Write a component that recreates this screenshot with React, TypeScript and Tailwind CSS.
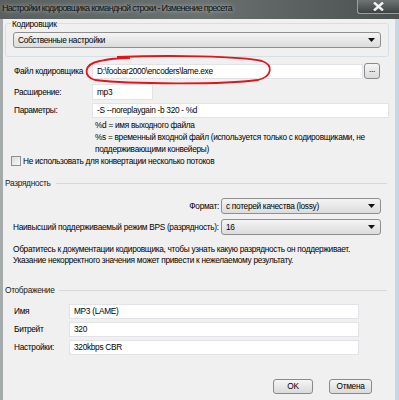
import React from "react";

const font = { fontFamily: '"Liberation Sans", Arial, sans-serif' };

function Arrow() {
  return (
    <svg width="7" height="4" viewBox="0 0 7 4" className="shrink-0">
      <path d="M0 0 H7 L3.5 4 Z" fill="#111" />
    </svg>
  );
}

function Combo({ value, className }: { value: string; className: string }) {
  return (
    <div
      className={
        "flex items-center justify-between rounded-[3px] border border-[#8e8f8f] bg-gradient-to-b from-[#f4f4f4] to-[#dcdcdc] pl-[4px] pr-[5px] text-[#000] " +
        className
      }
    >
      <span className="whitespace-nowrap leading-none">{value}</span>
      <Arrow />
    </div>
  );
}

function Field({ value, className }: { value: string; className: string }) {
  return (
    <div
      className={
        "flex items-center whitespace-nowrap border border-[#e2e3e6] bg-white pl-[4px] leading-none text-[#000] " +
        className
      }
    >
      {value}
    </div>
  );
}

function Section({ title, className }: { title: string; className: string }) {
  return (
    <div className={"flex items-center gap-[5px] pr-[8px] text-[#1a1a1a] " + className}>
      <span className="whitespace-nowrap leading-none">{title}</span>
      <div className="h-px flex-1 bg-[#d5d9dc]" />
    </div>
  );
}

function Button({ label, className }: { label: string; className: string }) {
  return (
    <div
      className={
        "flex items-center justify-center rounded-[3px] border border-[#8a8a8a] bg-gradient-to-b from-[#f5f5f5] to-[#dadada] leading-none text-[#000] " +
        className
      }
    >
      {label}
    </div>
  );
}

export default function App() {
  return (
    <div
      className="relative flex h-[400px] w-[399px] flex-col overflow-hidden bg-[#5b6161]"
      style={font}
    >
      {/* title bar */}
      <div className="flex h-[19px] shrink-0 items-start justify-between bg-gradient-to-r from-[#5a6060] via-[#6b7070] to-[#4b5151]">
        <span className="whitespace-nowrap pl-[2px] pt-[4px] text-[9px] leading-none tracking-[-0.7px] text-[#0c1010] [text-shadow:0_0_4px_rgba(255,255,255,0.7)]">
          Настройки кодировщика командной строки - Изменение пресета
        </span>
        <div className="flex h-[14px] w-[42px] shrink-0 items-center justify-center rounded-bl-[3px] border-b border-l border-[#9aa0a0] bg-gradient-to-b from-[#6f7575] to-[#3d4343]">
          <svg width="11" height="9" viewBox="0 0 11 9">
            <path d="M1 0.5 L10 8.5 M10 0.5 L1 8.5" stroke="#f4f4f4" strokeWidth="2.4" />
          </svg>
        </div>
      </div>

      <div className="flex flex-1">
        <div className="w-[3px] bg-[#a5abab]" />
        {/* dialog body */}
        <div className="flex flex-1 flex-col whitespace-nowrap bg-[#f0f0f0] text-[8.3px] tracking-[-0.3px] text-[#000]">
          {/* encoder group */}
          <div className="ml-[2px] mt-[4px] h-[34px] w-[384px] rounded-[3px] border border-[#d5dfe5]">
            <div className="ml-[5px] mt-[-5px] w-fit bg-[#f0f0f0] px-[1px] leading-[10px]">Кодировщик</div>
            <Combo value="Собственные настройки" className="ml-[7px] mt-[3px] h-[16px] w-[368px]" />
          </div>

          <div className="mt-[6px] flex items-center">
            <span className="w-[89px] pl-[11px] leading-none">Файл кодировщика</span>
            <Field value="D:\foobar2000\encoders\lame.exe" className="h-[15px] w-[271px]" />
            <Button label="..." className="ml-[1px] h-[16px] w-[16px] pb-[3px]" />
          </div>

          <div className="mt-[5px] flex items-center">
            <span className="w-[89px] pl-[11px] leading-none">Расширение:</span>
            <Field value="mp3" className="h-[16px] w-[61px]" />
          </div>

          <div className="mt-[3px] flex items-center">
            <span className="w-[89px] pl-[11px] leading-none">Параметры:</span>
            <Field value="-S --noreplaygain -b 320 - %d" className="h-[15px] w-[297px]" />
          </div>

          <div className="mt-[1px] pl-[92px] leading-[12px]">
            <div>%d = имя выходного файла</div>
            <div>%s = временный входной файл (используется только с кодировщиками, не</div>
            <div>поддерживающими конвейеры)</div>
          </div>

          <div className="mt-[1px] flex items-center pl-[8px]">
            <div className="h-[10px] w-[10px] border border-[#8f8f8f] bg-gradient-to-br from-[#dcdcdc] to-[#f8f8f8]" />
            <span className="ml-[2px] leading-none">Не использовать для конвертации несколько потоков</span>
          </div>

          <Section title="Разрядность" className="ml-[2px] mt-[13px]" />

          <div className="mt-[11px] flex items-center">
            <span className="w-[218px] pr-[2px] text-right leading-none">Формат:</span>
            <Combo value="с потерей качества (lossy)" className="h-[16px] w-[160px]" />
          </div>

          <div className="mt-[5px] flex items-center">
            <span className="w-[218px] pl-[10px] leading-none">Наивысший поддерживаемый режим BPS (разрядность):</span>
            <Combo value="16" className="h-[16px] w-[160px]" />
          </div>

          <div className="mt-[9px] pl-[10px] leading-[11px]">
            <div>Обратитесь к документации кодировщика, чтобы узнать какую разрядность он поддерживает.</div>
            <div>Указание некорректного значения может привести к нежелаемому результату.</div>
          </div>

          <Section title="Отображение" className="ml-[2px] mt-[20px]" />

          <div className="mt-[9px] flex flex-col gap-[3px]">
            {[
              ["Имя", "MP3 (LAME)"],
              ["Битрейт", "320"],
              ["Настройки:", "320kbps CBR"],
            ].map(([k, v]) => (
              <div key={k} className="flex items-center">
                <span className="w-[66px] pl-[11px] leading-none">{k}</span>
                <Field value={v} className="h-[15px] w-[290px]" />
              </div>
            ))}
          </div>

          <div className="mt-[24px] flex gap-[16px] pl-[270px]">
            <Button label="OK" className="h-[15px] w-[40px]" />
            <Button label="Отмена" className="h-[15px] w-[43px]" />
          </div>
        </div>
        <div className="w-[4px] bg-[#c7d7e1]" />
      </div>

      {/* red hand-drawn mark */}
      <svg className="pointer-events-none absolute left-0 top-0" width="399" height="400">
        <path
          d="M117 57 C170 55 240 56 262 61 C273 65 273 76 258 80 C220 85 130 84 95 80 C83 77 83 64 100 61 C108 59 118 58 130 58"
          fill="none"
          stroke="#e0141b"
          strokeWidth="1.8"
        />
      </svg>
    </div>
  );
}
